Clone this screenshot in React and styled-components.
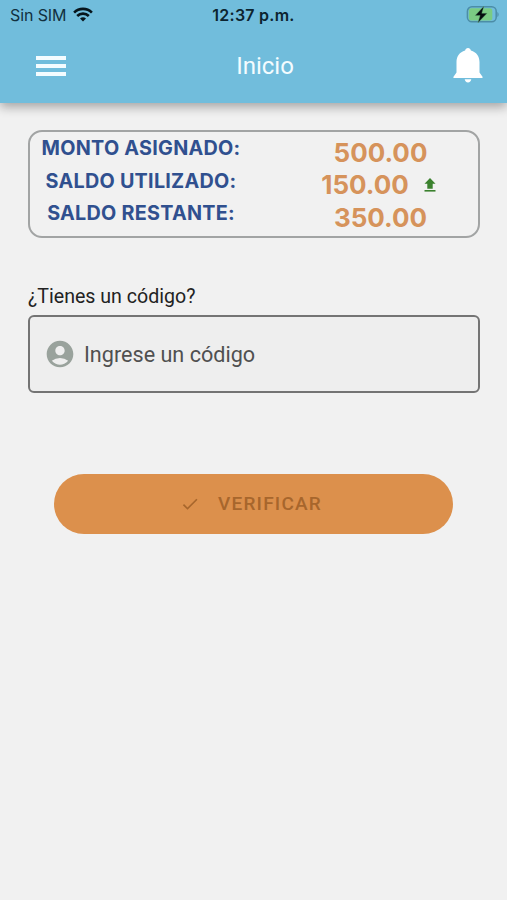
import React from "react";
import styled, { createGlobalStyle } from "styled-components";
import { MdAccountCircle, MdCheck } from "react-icons/md";

const GlobalStyle = createGlobalStyle`
body{
    margin: 0;
    background-color: #f1f1f1;
}
*{
    box-sizing: border-box;
}
`

const Screen = styled.div`
min-height: 900px;
background-color: #f1f1f1;
font-family: Roboto, sans-serif;
`

const Header = styled.header`
height: 103px;
background-color: #71bddc;
box-shadow: 0 4px 10px 0 rgba(0, 0, 0, 0.32);
`

const StatusBar = styled.div`
display: grid;
grid-template-columns: 1fr auto 1fr;
align-items: center;
height: 29px;
padding: 0 8px 0 10px;
font-family: Inter, sans-serif;
color: #12303f;
`

const Carrier = styled.div`
display: flex;
align-items: center;
gap: 7px;
font-size: 16px;
letter-spacing: -0.1px;
`

const Clock = styled.div`
margin-right: 2px;
font-size: 16px;
font-weight: 600;
letter-spacing: 0.25px;
color: #0c2430;
`

const Battery = styled.div`
display: flex;
justify-content: flex-end;
`

const Toolbar = styled.div`
display: grid;
grid-template-columns: 1fr auto 1fr;
align-items: center;
height: 73px;
padding: 0 24px 0 36px;
`

const MenuButton = styled.button`
display: flex;
flex-direction: column;
gap: 4px;
width: 30px;
padding: 0;
border: 0;
background: none;
span{
    height: 4px;
    background-color: #f4fcff;
}
`

const BellButton = styled.button`
justify-self: end;
display: flex;
padding: 0;
border: 0;
background: none;
`

const Title = styled.h1`
margin: 0 0 0 11px;
font-size: 24px;
font-weight: 400;
letter-spacing: 0;
color: #f4fcff;
`

const Content = styled.main`
padding: 28px 27px 0 28px;
`

const Summary = styled.section`
height: 108px;
margin-top: -1px;
padding: 1px 0 0;
border: 2px solid #a2a4a4;
border-radius: 14px;
`

const SummaryRow = styled.div`
display: grid;
grid-template-columns: 222px 1fr;
height: 32.5px;
font-family: Inter, sans-serif;
`

const Label = styled.div`
text-align: center;
font-size: 19.8px;
line-height: 31px;
font-weight: 680;
letter-spacing: 0.25px;
color: #30508f;
`

const Amount = styled.div`
display: flex;
justify-content: center;
align-items: center;
gap: 15px;
height: 38px;
padding-left: ${props => props.$flagged ? "27px" : "31px"};
font-size: 26px;
font-weight: 650;
color: #d6935b;
`

const Question = styled.label`
display: block;
margin-top: 47px;
font-size: 19.6px;
line-height: 24px;
color: #222;
`

const Field = styled.div`
display: flex;
align-items: center;
gap: 8px;
height: 78px;
margin-top: 6px;
padding-left: 14px;
border: 2px solid #747474;
border-radius: 6px;
background-color: #eee;
color: #99a29c;
input{
    flex: 1;
    min-width: 0;
    padding: 0;
    border: 0;
    outline: 0;
    background: none;
    font-family: inherit;
    font-size: 21.6px;
    &::placeholder{
        color: #505050;
        opacity: 1;
    }
}
`

const VerifyButton = styled.button`
display: flex;
justify-content: center;
align-items: center;
gap: 18px;
width: 399px;
height: 60px;
margin: 81px 0 0 26px;
padding: 0 5px 1px 0;
border: 0;
border-radius: 30px;
background-color: #dc904c;
color: #a7662c;
font-family: inherit;
font-size: 19px;
font-weight: 500;
letter-spacing: 1.2px;
`

const WifiIcon = () => (
    <svg width="20" height="15" viewBox="0 0 20 15" fill="none" stroke="#07151c" strokeWidth="2.6">
        <path d="M1.1 5.6a12.6 12.6 0 0 1 17.8 0" />
        <path d="M4.2 9a8.2 8.2 0 0 1 11.6 0" />
        <path d="M10 14.6l-3-3a4.3 4.3 0 0 1 6 0z" fill="#07151c" stroke="none" />
    </svg>
)

const BatteryIcon = () => (
    <svg width="33" height="18" viewBox="0 0 33 18">
        <rect x="1.4" y="0.8" width="28.8" height="15" rx="4.5" fill="none" stroke="#4c8da7" strokeWidth="1.5" />
        <rect x="2.8" y="2.2" width="23.5" height="12.2" rx="2.5" fill="#7bcb83" />
        <path d="M31.4 6c1.6.7 1.6 4.3 0 5z" fill="#4c8da7" />
        <path d="M17.9 0.3L9.2 9.4h4.9l-2.2 7.4 9.2-9.5h-5.300z" fill="#050c0e" stroke="#5fa66e" strokeWidth="0.4" />
    </svg>
)

const BellIcon = () => (
    <svg width="30" height="35" viewBox="0 0 30 35" fill="#fff">
        <path d="M15 0c1.5 0 2.6 1 2.9 2.500 5.500 1.500 8.600 5.800 8.600 11.500v10.500l3 4.200c.4.600.1 1.300-.7 1.300H1.200c-.8 0-1.100-.7-.7-1.300l3-4.200V14c0-5.700 3.100-10 8.600-11.500C12.400 1 13.500 0 15 0z" />
        <path d="M11.700 31.300h6.600c-.3 2-1.500 3.100-3.300 3.100s-3-1.100-3.300-3.100z" />
    </svg>
)

const UploadIcon = () => (
    <svg width="12" height="14" viewBox="0 0 12 14" fill="#3b812e">
        <path d="M6 0l5.5 5.800H8.700v5H3.300v-5H.5z" />
        <path d="M.5 12h11v1.600H.5z" />
    </svg>
)

const balances = [
    { label: "MONTO ASIGNADO:", amount: "500.00" },
    { label: "SALDO UTILIZADO:", amount: "150.00", flagged: true },
    { label: "SALDO RESTANTE:", amount: "350.00" },
]

const App = () => (
    <Screen>
        <GlobalStyle />
        <Header>
            <StatusBar>
                <Carrier>Sin SIM <WifiIcon /></Carrier>
                <Clock>12:37 p.m.</Clock>
                <Battery><BatteryIcon /></Battery>
            </StatusBar>
            <Toolbar>
                <MenuButton><span /><span /><span /></MenuButton>
                <Title>Inicio</Title>
                <BellButton><BellIcon /></BellButton>
            </Toolbar>
        </Header>
        <Content>
            <Summary>
                {balances.map(({ label, amount, flagged }) => (
                    <SummaryRow key={label}>
                        <Label>{label}</Label>
                        <Amount $flagged={flagged}>
                            {amount}
                            {flagged && <UploadIcon />}
                        </Amount>
                    </SummaryRow>
                ))}
            </Summary>
            <Question htmlFor="codigo">¿Tienes un código?</Question>
            <Field>
                <MdAccountCircle size={32} />
                <input id="codigo" placeholder="Ingrese un código" />
            </Field>
            <VerifyButton disabled>
                <MdCheck size={20} />
                VERIFICAR
            </VerifyButton>
        </Content>
    </Screen>
)

export default App
